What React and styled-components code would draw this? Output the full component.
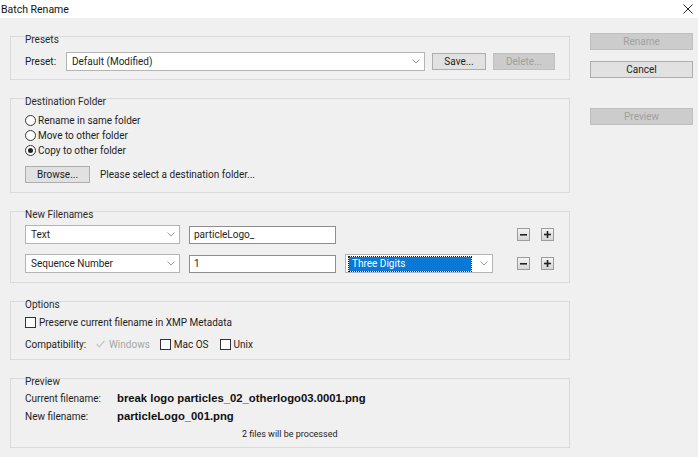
import React from 'react'
import styled, { createGlobalStyle } from 'styled-components'

const GlobalStyle = createGlobalStyle`
  html, body {
    margin: 0;
    padding: 0;
    background: #f0f0f0;
  }
  body {
    font-family: Roboto, "Liberation Sans", Arial, sans-serif;
    font-size: 10px;
    color: #1e1e1e;
  }
`

const Chevron = () => (
  <svg width="8" height="5" viewBox="0 0 8 5">
    <polyline points="0.5,0.5 4,4 7.5,0.5" fill="none" stroke="#9a9a9a" strokeWidth="1" />
  </svg>
)

const Select = ({ value, width, highlighted }) => (
  <SelectBox $width={width}>
    {highlighted ? <Highlight>{value}</Highlight> : <SelectValue>{value}</SelectValue>}
    <ChevronWrap><Chevron /></ChevronWrap>
  </SelectBox>
)

const Minus = () => (
  <MiniButton>
    <svg width="7" height="7" viewBox="0 0 7 7"><rect x="0" y="3" width="7" height="1.6" fill="#222" /></svg>
  </MiniButton>
)

const Plus = () => (
  <MiniButton>
    <svg width="7" height="7" viewBox="0 0 7 7">
      <rect x="0" y="2.7" width="7" height="1.6" fill="#222" />
      <rect x="2.7" y="0" width="1.6" height="7" fill="#222" />
    </svg>
  </MiniButton>
)

const App = () => {
  return (
    <Window>
      <GlobalStyle />
      <TitleBar>
        <span>Batch Rename</span>
        <svg width="10" height="10" viewBox="0 0 10 10">
          <path d="M0.5 0.5 L9.5 9.5 M9.5 0.5 L0.5 9.5" stroke="#222" strokeWidth="1" />
        </svg>
      </TitleBar>
      <Body>
        <LeftColumn>
          <Group $pb={8}>
            <GroupLabel $mb={7}>Presets</GroupLabel>
            <Row>
              <FieldLabel $width={41}>Preset:</FieldLabel>
              <Select value="Default (Modified)" width={359} />
              <Button $width={54} $ml={7}>Save...</Button>
              <Button $width={62} $ml={7} disabled>Delete...</Button>
            </Row>
          </Group>

          <Group $pb={9}>
            <GroupLabel $mb={6}>Destination Folder</GroupLabel>
            <OptionRow $h={15}><Radio /><span>Rename in same folder</span></OptionRow>
            <OptionRow $h={15}><Radio /><span>Move to other folder</span></OptionRow>
            <OptionRow $h={15}><Radio $checked /><span>Copy to other folder</span></OptionRow>
            <Row $mt={8}>
              <Button $width={65}>Browse...</Button>
              <Hint>Please select a destination folder...</Hint>
            </Row>
          </Group>

          <Group $pb={9}>
            <GroupLabel $mb={5}>New Filenames</GroupLabel>
            <Row>
              <Select value="Text" width={155} />
              <TextInput $width={147}>particleLogo_</TextInput>
              <Spacer $width={148} />
              <MiniButtons><Minus /><Plus /></MiniButtons>
            </Row>
            <Row $mt={10}>
              <Select value="Sequence Number" width={155} />
              <TextInput $width={147}>1</TextInput>
              <Select value="Three Digits" width={148} highlighted />
              <MiniButtons><Minus /><Plus /></MiniButtons>
            </Row>
          </Group>

          <Group $pb={8}>
            <GroupLabel $mb={5}>Options</GroupLabel>
            <OptionRow $h={14}><Checkbox /><span>Preserve current filename in XMP Metadata</span></OptionRow>
            <OptionRow $h={14} $mt={8}>
              <FieldLabel $width={70}>Compatibility:</FieldLabel>
              <Checkbox $disabled $checked>
                <svg width="9" height="8" viewBox="0 0 9 8">
                  <polyline points="0.5,4 3.2,6.8 8.5,0.8" fill="none" stroke="#c4c4c4" strokeWidth="1.2" />
                </svg>
              </Checkbox>
              <Muted>Windows</Muted>
              <Checkbox $ml={10} /><span>Mac OS</span>
              <Checkbox $ml={11} /><span>Unix</span>
            </OptionRow>
          </Group>

          <Group $pb={6}>
            <GroupLabel $mb={4}>Preview</GroupLabel>
            <OptionRow $h={14}>
              <FieldLabel $width={92}>Current filename:</FieldLabel>
              <Value>break logo particles_02_otherlogo03.0001.png</Value>
            </OptionRow>
            <OptionRow $h={14} $mt={4}>
              <FieldLabel $width={92}>New filename:</FieldLabel>
              <Value>particleLogo_001.png</Value>
            </OptionRow>
            <OptionRow $h={14} $mt={4}>
              <Note>2 files will be processed</Note>
            </OptionRow>
          </Group>
        </LeftColumn>

        <RightColumn>
          <SideButton disabled>Rename</SideButton>
          <SideButton $mt={11}>Cancel</SideButton>
          <SideButton $mt={30} disabled>Preview</SideButton>
        </RightColumn>
      </Body>
    </Window>
  )
}

export default App

const Window = styled.div`
  width: 698px;
  height: 457px;
  background: #f0f0f0;
  overflow: hidden;
`

const TitleBar = styled.div`
  height: 18px;
  background: #ffffff;
  display: flex;
  align-items: center;
  justify-content: space-between;
  padding: 0 5px 0 1px;
  font-size: 10.5px;
  color: #111;
  box-sizing: border-box;
`

const Body = styled.div`
  display: flex;
  padding: 15px 0 0 10px;
`

const LeftColumn = styled.div`
  width: 560px;
  display: flex;
  flex-direction: column;
  gap: 18px;
  padding-top: 3px;
`

const RightColumn = styled.div`
  width: 103px;
  margin-left: 20px;
  display: flex;
  flex-direction: column;
`

const Group = styled.div`
  border: 1px solid #dadada;
  padding: 0 14px ${p => p.$pb}px 14px;
  box-sizing: border-box;
`

const GroupLabel = styled.div`
  line-height: 10px;
  height: 10px;
  margin-top: -2px;
  margin-bottom: ${p => p.$mb}px;
  color: #2a2a2a;
`

const Row = styled.div`
  display: flex;
  align-items: center;
  margin-top: ${p => p.$mt || 0}px;
`

const OptionRow = styled.div`
  display: flex;
  align-items: center;
  height: ${p => p.$h}px;
  margin-top: ${p => p.$mt || 0}px;
  white-space: nowrap;
`

const FieldLabel = styled.span`
  width: ${p => p.$width}px;
  flex-shrink: 0;
  white-space: nowrap;
`

const SelectBox = styled.div`
  width: ${p => p.$width}px;
  height: 19px;
  box-sizing: border-box;
  background: #ffffff;
  border: 1px solid #b4b4b4;
  display: flex;
  align-items: center;
  padding: 0 2px 0 3px;
  flex-shrink: 0;
  & + & { margin-left: 9px; }
`

const SelectValue = styled.span`
  flex: 1;
  padding-left: 2px;
  white-space: nowrap;
`

const Highlight = styled.span`
  flex: 1;
  height: 14px;
  line-height: 13px;
  background: #0a78d6;
  color: #ffffff;
  outline: 1px dotted #1a1a1a;
  box-sizing: border-box;
  padding-left: 3px;
  margin-right: 7px;
  white-space: nowrap;
`

const ChevronWrap = styled.span`
  width: 12px;
  display: flex;
  justify-content: center;
`

const TextInput = styled.div`
  width: ${p => p.$width}px;
  height: 18px;
  box-sizing: border-box;
  background: #ffffff;
  border: 1px solid #8e8e8e;
  margin: 0 9px;
  padding-left: 4px;
  line-height: 16px;
  flex-shrink: 0;
`

const Spacer = styled.div`
  width: ${p => p.$width}px;
  flex-shrink: 0;
`

const MiniButtons = styled.div`
  display: flex;
  gap: 11px;
  margin-left: 24px;
`

const MiniButton = styled.div`
  width: 13px;
  height: 13px;
  box-sizing: border-box;
  border: 1px solid #9c9c9c;
  background: linear-gradient(#f4f4f4, #d6d6d6);
  display: flex;
  align-items: center;
  justify-content: center;
`

const Button = styled.button`
  width: ${p => p.$width}px;
  height: 17px;
  margin-left: ${p => p.$ml || 0}px;
  padding: 0;
  box-sizing: border-box;
  font-family: inherit;
  font-size: 10px;
  background: ${p => (p.disabled ? '#cccccc' : '#e1e1e1')};
  border: 1px solid ${p => (p.disabled ? '#bfbfbf' : '#adadad')};
  color: ${p => (p.disabled ? '#a0a0a0' : '#1e1e1e')};
  flex-shrink: 0;
`

const SideButton = styled(Button)`
  width: 103px;
  margin-top: ${p => p.$mt || 0}px;
`

const Hint = styled.span`
  margin-left: 10px;
`

const Radio = styled.span`
  width: 11px;
  height: 11px;
  box-sizing: border-box;
  border-radius: 50%;
  border: 1px solid #333;
  background: #fff;
  margin-right: 2px;
  display: inline-flex;
  align-items: center;
  justify-content: center;
  flex-shrink: 0;
  &::after {
    content: '';
    width: 5px;
    height: 5px;
    border-radius: 50%;
    background: ${p => (p.$checked ? '#222' : 'transparent')};
  }
`

const Checkbox = styled.span`
  width: 11px;
  height: 11px;
  box-sizing: border-box;
  border: 1px solid ${p => (p.$disabled ? 'transparent' : '#333')};
  background: ${p => (p.$disabled ? 'transparent' : '#fff')};
  margin-right: 3px;
  margin-left: ${p => p.$ml || 0}px;
  display: inline-flex;
  align-items: center;
  justify-content: center;
  flex-shrink: 0;
`

const Muted = styled.span`
  color: #a6a6a6;
`

const Value = styled.span`
  font-family: "Liberation Sans", Arial, sans-serif;
  font-weight: 700;
  font-size: 11.3px;
  color: #111;
`

const Note = styled.span`
  margin-left: 217px;
  font-size: 9px;
`
